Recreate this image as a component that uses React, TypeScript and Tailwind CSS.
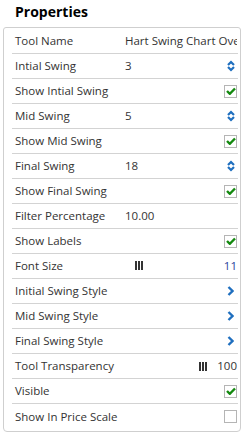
import type { ReactNode } from 'react'

type Row = {
  label: string
  value?: string
  control?: 'spin' | 'check' | 'uncheck' | 'arrow' | 'bars'
  right?: string
}

const rows: Row[] = [
  { label: 'Tool Name', value: 'Hart Swing Chart Overlay' },
  { label: 'Intial Swing', value: '3', control: 'spin' },
  { label: 'Show Intial Swing', control: 'check' },
  { label: 'Mid Swing', value: '5', control: 'spin' },
  { label: 'Show Mid Swing', control: 'check' },
  { label: 'Final Swing', value: '18', control: 'spin' },
  { label: 'Show Final Swing', control: 'check' },
  { label: 'Filter Percentage', value: '10.00' },
  { label: 'Show Labels', control: 'check' },
  { label: 'Font Size', control: 'bars', right: '11' },
  { label: 'Initial Swing Style', control: 'arrow' },
  { label: 'Mid Swing Style', control: 'arrow' },
  { label: 'Final Swing Style', control: 'arrow' },
  { label: 'Tool Transparency', control: 'bars', right: '100' },
  { label: 'Visible', control: 'check' },
  { label: 'Show In Price Scale', control: 'uncheck' },
]

function Spin() {
  return (
    <svg width="8" height="12" viewBox="0 0 8 12" className="text-[#1f6fbf]">
      <path d="M1 5 L4 2 L7 5" fill="none" stroke="currentColor" strokeWidth="2.2" />
      <path d="M1 7 L4 10 L7 7" fill="none" stroke="currentColor" strokeWidth="2.2" />
    </svg>
  )
}

function Check({ on }: { on: boolean }) {
  return (
    <div className="flex h-[13px] w-[13px] items-center justify-center border border-[#b5b5b5] bg-white">
      {on && (
        <svg width="10" height="8" viewBox="0 0 10 8">
          <path d="M1 4 L3.8 6.8 L9 1.5" fill="none" stroke="#13890f" strokeWidth="2.4" />
        </svg>
      )}
    </div>
  )
}

function Arrow() {
  return (
    <svg width="7" height="10" viewBox="0 0 7 10">
      <path d="M1.5 1 L5.5 5 L1.5 9" fill="none" stroke="#1f6fbf" strokeWidth="2.4" />
    </svg>
  )
}

function Bars() {
  return (
    <svg width="8" height="9" viewBox="0 0 8 9">
      <rect x="0" y="0" width="2" height="9" fill="#333" />
      <rect x="3" y="0" width="2" height="9" fill="#333" />
      <rect x="6" y="0" width="2" height="9" fill="#333" />
    </svg>
  )
}

function Cell({ children }: { children: ReactNode }) {
  return <div className="flex w-[13px] items-center justify-center">{children}</div>
}

export default function App() {
  return (
    <div
      className="h-[436px] w-[251px] bg-white text-[#333]"
      style={{ fontFamily: '"Open Sans", Arial, sans-serif' }}
    >
      <h2 className="pl-[15px] pt-[1px] text-[14px] font-bold leading-[22px] text-black">Properties</h2>
      <div className="ml-[3px] mt-[4px] w-[238px] rounded-b-[4px] rounded-t-[3px] border border-[#cfcfcf] pb-[2px] pl-[8px] pr-[2px] pt-[1px]">
        {rows.map((r, i) => (
          <div
            key={r.label}
            className={
              'flex h-[25px] items-center pl-[3px] pr-[1px] text-[11.5px] ' +
              (i < rows.length - 1 ? 'border-b border-[#d3d3d3]' : '')
            }
          >
            <span className="w-[110px] shrink-0 whitespace-nowrap">{r.label}</span>
            <span className="min-w-0 flex-1 overflow-hidden whitespace-nowrap">
              {r.value}
              {r.control === 'bars' && r.right === '11' && (
                <span className="ml-[10px] inline-flex"><Bars /></span>
              )}
            </span>
            {r.control === 'bars' && r.right === '100' && (
              <span className="mr-[10px] inline-flex"><Bars /></span>
            )}
            {r.right && <span className={r.right === '11' ? 'text-[#2b3f9a]' : ''}>{r.right}</span>}
            {r.control === 'spin' && <Cell><Spin /></Cell>}
            {r.control === 'check' && <Check on />}
            {r.control === 'uncheck' && <Check on={false} />}
            {r.control === 'arrow' && <Cell><Arrow /></Cell>}
          </div>
        ))}
      </div>
    </div>
  )
}
